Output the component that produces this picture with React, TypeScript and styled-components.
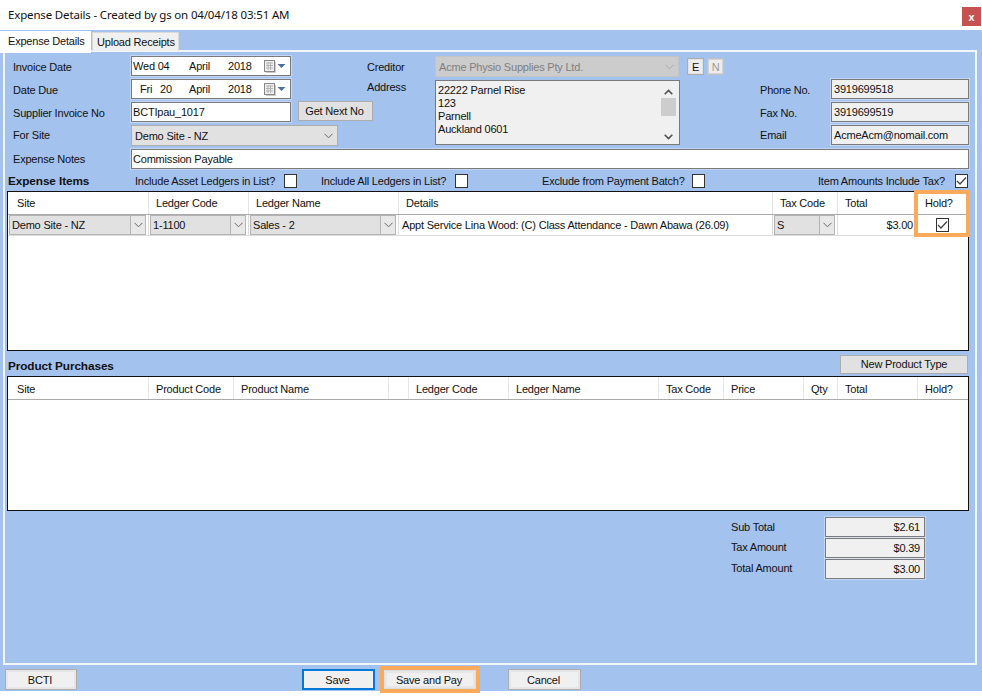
import React from "react";
import styled, { createGlobalStyle, css } from "styled-components";

const Global = createGlobalStyle`
  html, body { margin: 0; padding: 0; background: #fff; }
  #root { width: 982px; height: 700px; overflow: hidden; }
  * { box-sizing: border-box; }
  body { font-family: "Liberation Sans", Arial, sans-serif; font-size: 11px; letter-spacing: -0.2px; color: #111; }
`;

const BLUE = "#a4c2ee";
const ORANGE = "#fbaa5c";

const Page = styled.div`display: flex; flex-direction: column; width: 982px; height: 700px; background: #fff;`;
const TitleBar = styled.header`
  height: 30px; flex: none; display: flex; align-items: flex-start; justify-content: space-between;
  padding: 7px 1px 0 8px;
`;
const TitleText = styled.div`font-family: "Noto Sans", sans-serif; font-size: 11.5px; letter-spacing: -0.16px; line-height: 16px; color: #111;`;
const CloseButton = styled.div`
  width: 19px; height: 19px; background: #c75050; color: #fff; font-weight: bold; font-size: 11px;
  display: flex; align-items: center; justify-content: center; letter-spacing: 0;
`;
const BlueArea = styled.div`height: 661px; flex: none; background: ${BLUE}; display: flex; flex-direction: column;`;
const TabStrip = styled.div`height: 20px; flex: none; display: flex; align-items: flex-start; position: relative; z-index: 1;`;
const Tab = styled.div<{ $active?: boolean }>`
  display: flex; align-items: center;
  ${p => p.$active ? css`
    width: 91px; height: 22px; margin-top: 1px; background: #fff; padding: 0 0 3px 8px;
  ` : css`
    width: 87px; height: 19px; margin: 2px 0 0 1px; background: #f0f0f0; border: 1px solid #d9d9d9; border-bottom: none; padding-left: 4px;
  `}
`;
const Panel = styled.section`
  height: 615px; flex: none; margin: 0 5px 0 3px; border: 2px solid #f2f5fa; padding: 4px 6px 0 2px;
  display: flex; flex-direction: column;
`;
const TopForm = styled.div`display: grid; grid-template-columns: 354px 393px 209px; margin-left: 6px; height: 90px;`;
const Column = styled.div<{ $offset?: number }>`display: flex; flex-direction: column; padding-top: ${p => p.$offset ?? 0}px;`;
const Row = styled.div<{ $height?: number }>`display: flex; align-items: flex-start; height: ${p => p.$height ?? 23}px;`;
const Label = styled.div<{ $width: number; $top?: number }>`
  width: ${p => p.$width}px; flex: none; line-height: 14px; padding-top: ${p => p.$top ?? 4}px; white-space: nowrap;
`;
const FieldBase = css`height: 20px; border: 1px solid #7a7a7a; box-shadow: 0 0 0 1px rgba(255,255,255,.35); display: flex; align-items: center; white-space: nowrap;`;
const TextField = styled.div<{ $width?: number; $readonly?: boolean; $right?: boolean }>`
  ${FieldBase}
  ${p => p.$width ? `width: ${p.$width}px; flex: none;` : "flex: 1;"}
  background: ${p => p.$readonly ? "#f0f0f0" : "#fff"};
  padding: 0 ${p => p.$right ? 4 : 1}px 0 ${p => p.$readonly ? 2 : 1}px;
  justify-content: ${p => p.$right ? "flex-end" : "flex-start"};
`;
const DateField = styled.div`${FieldBase} width: 160px; flex: none; background: #fff; padding-left: 1px; position: relative;`;
const DatePart = styled.span<{ $width: number; $indent?: number }>`
  display: inline-block; flex: none; width: ${p => p.$width}px; padding-left: ${p => p.$indent ?? 0}px;
`;
const DatePicker = styled.svg`margin-left: 1px; flex: none;`;
const SelectBox = styled.div<{ $width: number; $disabled?: boolean }>`
  width: ${p => p.$width}px; height: 21px; flex: none; display: flex; align-items: center; justify-content: space-between;
  background: ${p => p.$disabled ? "#cccccc" : "#e1e1e1"};
  color: ${p => p.$disabled ? "#7f7f7f" : "#111"};
  border: 1px solid ${p => p.$disabled ? "#c4c4c4" : "#adadad"};
  padding: 0 4px 0 3px;
`;
const Chevron = ({ color = "#666" }: { color?: string }) => (
  <svg width="9" height="6" viewBox="0 0 9 6" fill="none"><path d="M.5 .8 4.5 4.8 8.5 .8" stroke={color} strokeWidth="1" /></svg>
);
const GetNext = styled.button`
  width: 75px; height: 20px; flex: none; margin: -1px 0 0 7px; background: #e1e1e1; border: 1px solid #adadad; padding: 0 2px 0 0;
  font: inherit; letter-spacing: inherit; color: inherit;
`;
const CreditorRow = styled.div`display: flex; align-items: flex-start; height: 24px;`;
const SmallButton = styled.div<{ $disabled?: boolean }>`
  width: 17px; height: 17px; flex: none; margin: 2px 0 0 ${p => p.$disabled ? 3 : 8}px;
  background: #ededed; border: 1px solid ${p => p.$disabled ? "#c4c4c4" : "#adadad"}; box-shadow: inset 0 0 0 1px ${p => p.$disabled ? "#d2d2d2" : "#e1e1e1"};
  color: ${p => p.$disabled ? "#9a9a9a" : "#111"}; display: flex; align-items: center; justify-content: center; font-size: 11px;
`;
const AddressBox = styled.div`
  width: 245px; height: 65px; flex: none; background: #f0f0f0; border: 1px solid #7a7a7a; display: flex; justify-content: space-between; padding: 3px 2px 0 2px;
`;
const AddressLines = styled.div`line-height: 13px; white-space: nowrap;`;
const ScrollBar = styled.div`width: 17px; height: 59px; display: flex; flex-direction: column; align-items: center; padding-top: 5px; padding-bottom: 3px;`;
const ScrollThumb = styled.div`width: 15px; height: 18px; margin-top: 3px; background: #cdcdcd;`;
const ScrollSpacer = styled.div`flex: 1;`;
const ScrollArrow = ({ up }: { up?: boolean }) => (
  <svg width="9" height="6" viewBox="0 0 9 6" fill="none"><path d={up ? "M.7 5.2 4.5 1.4 8.3 5.2" : "M.7 .8 4.5 4.6 8.3 .8"} stroke="#505050" strokeWidth="1.6" /></svg>
);
const NotesRow = styled.div`display: flex; align-items: flex-start; margin: 3px 0 0 6px; height: 20px;`;
const SectionBar = styled.div<{ $columns: string; $height: number; $pad?: number }>`
  display: grid; grid-template-columns: ${p => p.$columns}; align-items: center; height: ${p => p.$height}px; padding-top: ${p => p.$pad ?? 0}px;
`;
const SectionTitle = styled.div<{ $drop?: number }>`
  font-weight: bold; font-size: 11.8px; letter-spacing: -0.1px; padding-left: 1px; padding-top: ${p => p.$drop ?? 0}px; white-space: nowrap;
`;
const CheckField = styled.div`display: flex; align-items: center;`;
const CheckLabel = styled.span<{ $width: number }>`width: ${p => p.$width}px; flex: none; white-space: nowrap;`;
const Check = styled.span`
  width: 13px; height: 14px; flex: none; background: #fff; border: 1px solid #333; display: flex; align-items: center; justify-content: center;
`;
const Tick = () => (
  <svg width="11" height="10" viewBox="0 0 11 10" fill="none"><path d="M1 5 4 8 10 1.5" stroke="#444" strokeWidth="1.3" /></svg>
);
const Table = styled.div<{ $height: number }>`
  position: relative; width: 962px; height: ${p => p.$height}px; flex: none; background: #fff; border: 1px solid #111;
`;
const HeaderRow = styled.div<{ $columns: string; $pad: number }>`
  display: grid; grid-template-columns: ${p => p.$columns}; height: 23px; border-bottom: 1px solid #ababab;
  & > div { padding-top: ${p => p.$pad}px; }
`;
const HeaderCell = styled.div`
  padding-left: 7px; border-right: 1px solid #e6e6e6; line-height: 14px; white-space: nowrap;
  &:first-child { padding-left: 9px; }
  &:last-child { border-right: none; }
`;
const DataRow = styled.div<{ $columns: string }>`
  display: grid; grid-template-columns: ${p => p.$columns}; height: 21px; border-bottom: 1px solid #dcdcdc;
`;
const DataCell = styled.div<{ $right?: boolean; $center?: boolean }>`
  display: flex; align-items: center; padding: 0 ${p => p.$right ? 4 : p.$center ? 2 : 0}px 0 ${p => p.$right || p.$center ? 0 : 3}px; border-right: 1px solid #dcdcdc;
  justify-content: ${p => p.$right ? "flex-end" : p.$center ? "center" : "flex-start"}; white-space: nowrap;
  &:last-child { border-right: none; }
`;
const GridSelect = styled.div`
  height: 20px; width: 100%; margin-left: -2px; background: #e1e1e1; border: 1px solid #b4b4b4; display: flex; justify-content: space-between; align-items: stretch; padding-left: 2px;
`;
const GridSelectText = styled.span`align-self: center;`;
const GridSelectArrow = styled.span`
  width: 15px; flex: none; background: #e8e8e8; border-left: 1px solid #b4b4b4; display: flex; align-items: center; justify-content: center;
`;
const Highlight = styled.div`
  position: absolute; left: 906px; top: -2px; width: 56px; height: 47px; border: 4px solid ${ORANGE}; pointer-events: none;
`;
const NewTypeButton = styled.div`
  height: 19px; width: 128px; margin-left: auto; margin-right: 1px; background: #e1e1e1; border: 1px solid #adadad; display: flex; align-items: center; justify-content: center;
`;
const TotalsBlock = styled.div`margin: 6px 0 0 724px; display: flex; flex-direction: column; gap: 1px;`;
const TotalsRow = styled.div`display: flex; align-items: flex-start; height: 20px;`;
const BottomBar = styled.footer`
  height: 26px; flex: none; display: flex; align-items: flex-start; padding: 4px 0 0 5px;
`;
const ActionButton = styled.button<{ $width: number; $gap?: number; $primary?: boolean; $marked?: boolean }>`
  width: ${p => p.$width}px; height: 21px; flex: none; margin-left: ${p => p.$gap ?? 0}px; padding: 0 2px 0 0; background: #f0f0f0;
  font: inherit; letter-spacing: inherit; color: inherit;
  border: 1px solid #adadad; box-shadow: inset 0 0 0 2px #e6e6e6;
  ${p => p.$primary && css`border: 2px solid #0078d7; box-shadow: none;`}
  ${p => p.$marked && css`height: 19px; margin-top: 1px; border: 1px solid #dedede; outline: 4px solid ${ORANGE}; position: relative;`}
`;

const itemColumns = "141px 100px 150px 374px 65px 80px 50px";
const productColumns = "141px 85px 155px 20px 100px 150px 65px 80px 34px 80px 50px";
const itemHeaders = ["Site", "Ledger Code", "Ledger Name", "Details", "Tax Code", "Total", "Hold?"];
const productHeaders = ["Site", "Product Code", "Product Name", "", "Ledger Code", "Ledger Name", "Tax Code", "Price", "Qty", "Total", "Hold?"];

const Calendar = () => (
  <DatePicker width="22" height="13" viewBox="0 0 22 13" fill="none">
    <rect x=".5" y=".5" width="10" height="11" fill="#eee" stroke="#888" />
    <path d="M2 3h7M2 5.5h7M2 8h7M4 2v8M6.5 2v8" stroke="#b4b4b4" />
    <path d="M11.5 2v10.5H2" stroke="#c9c9c9" />
    <path d="M13.5 4h8l-4 4z" fill="#4c6f9b" />
  </DatePicker>
);

const GridSelectCell = ({ text }: { text: string }) => (
  <DataCell>
    <GridSelect>
      <GridSelectText>{text}</GridSelectText>
      <GridSelectArrow><Chevron /></GridSelectArrow>
    </GridSelect>
  </DataCell>
);

export default function App() {
  return (
    <Page>
      <Global />
      <TitleBar>
        <TitleText>Expense Details - Created by gs on 04/04/18 03:51 AM</TitleText>
        <CloseButton>x</CloseButton>
      </TitleBar>
      <BlueArea>
        <TabStrip>
          <Tab $active>Expense Details</Tab>
          <Tab>Upload Receipts</Tab>
        </TabStrip>
        <Panel>
          <TopForm>
            <Column>
              <Row>
                <Label $width={118}>Invoice Date</Label>
                <DateField>
                  <DatePart $width={56}>Wed 04</DatePart>
                  <DatePart $width={39}>April</DatePart>
                  <DatePart $width={35}>2018</DatePart>
                  <Calendar />
                </DateField>
              </Row>
              <Row>
                <Label $width={118}>Date Due</Label>
                <DateField>
                  <DatePart $width={27} $indent={7}>Fri</DatePart>
                  <DatePart $width={29}>20</DatePart>
                  <DatePart $width={39}>April</DatePart>
                  <DatePart $width={35}>2018</DatePart>
                  <Calendar />
                </DateField>
              </Row>
              <Row>
                <Label $width={118}>Supplier Invoice No</Label>
                <TextField $width={160}>BCTIpau_1017</TextField>
                <GetNext>Get Next No</GetNext>
              </Row>
              <Row>
                <Label $width={118} $top={3}>For Site</Label>
                <SelectBox $width={207}>Demo Site - NZ<Chevron /></SelectBox>
              </Row>
            </Column>
            <Column>
              <CreditorRow>
                <Label $width={68}>Creditor</Label>
                <SelectBox $width={244} $disabled>Acme Physio Supplies Pty Ltd.<Chevron color="#aaa" /></SelectBox>
                <SmallButton>E</SmallButton>
                <SmallButton $disabled>N</SmallButton>
              </CreditorRow>
              <Row $height={65}>
                <Label $width={68} $top={0}>Address</Label>
                <AddressBox>
                  <AddressLines>22222 Parnel Rise<br />123<br />Parnell<br />Auckland 0601</AddressLines>
                  <ScrollBar>
                    <ScrollArrow up />
                    <ScrollThumb />
                    <ScrollSpacer />
                    <ScrollArrow />
                  </ScrollBar>
                </AddressBox>
              </Row>
            </Column>
            <Column $offset={23}>
              <Row>
                <Label $width={71}>Phone No.</Label>
                <TextField $readonly>3919699518</TextField>
              </Row>
              <Row>
                <Label $width={71}>Fax No.</Label>
                <TextField $readonly>3919699519</TextField>
              </Row>
              <Row>
                <Label $width={71} $top={3}>Email</Label>
                <TextField $readonly>AcmeAcm@nomail.com</TextField>
              </Row>
            </Column>
          </TopForm>
          <NotesRow>
            <Label $width={118} $top={3}>Expense Notes</Label>
            <TextField>Commission Payable</TextField>
          </NotesRow>
          <SectionBar $columns="128px 186px 221px 276px 1fr" $height={22} $pad={2}>
            <SectionTitle>Expense Items</SectionTitle>
            <CheckField><CheckLabel $width={149}>Include Asset Ledgers in List?</CheckLabel><Check /></CheckField>
            <CheckField><CheckLabel $width={134}>Include All Ledgers in List?</CheckLabel><Check /></CheckField>
            <CheckField><CheckLabel $width={150}>Exclude from Payment Batch?</CheckLabel><Check /></CheckField>
            <CheckField><CheckLabel $width={137}>Item Amounts Include Tax?</CheckLabel><Check><Tick /></Check></CheckField>
          </SectionBar>
          <Table $height={160}>
            <HeaderRow $columns={itemColumns} $pad={4}>
              {itemHeaders.map(h => <HeaderCell key={h}>{h}</HeaderCell>)}
            </HeaderRow>
            <DataRow $columns={itemColumns}>
              <GridSelectCell text="Demo Site - NZ" />
              <GridSelectCell text="1-1100" />
              <GridSelectCell text="Sales - 2" />
              <DataCell>Appt Service Lina Wood: (C) Class Attendance - Dawn Abawa (26.09)</DataCell>
              <GridSelectCell text="S" />
              <DataCell $right>$3.00</DataCell>
              <DataCell $center><Check><Tick /></Check></DataCell>
            </DataRow>
            <Highlight />
          </Table>
          <SectionBar $columns="1fr 1fr" $height={25} $pad={1}>
            <SectionTitle $drop={3}>Product Purchases</SectionTitle>
            <NewTypeButton>New Product Type</NewTypeButton>
          </SectionBar>
          <Table $height={135}>
            <HeaderRow $columns={productColumns} $pad={5}>
              {productHeaders.map((h, i) => <HeaderCell key={i}>{h}</HeaderCell>)}
            </HeaderRow>
          </Table>
          <TotalsBlock>
            <TotalsRow>
              <Label $width={94} $top={3}>Sub Total</Label>
              <TextField $width={100} $readonly $right>$2.61</TextField>
            </TotalsRow>
            <TotalsRow>
              <Label $width={94} $top={2}>Tax Amount</Label>
              <TextField $width={100} $readonly $right>$0.39</TextField>
            </TotalsRow>
            <TotalsRow>
              <Label $width={94} $top={2}>Total Amount</Label>
              <TextField $width={100} $readonly $right>$3.00</TextField>
            </TotalsRow>
          </TotalsBlock>
        </Panel>
        <BottomBar>
          <ActionButton $width={72}>BCTI</ActionButton>
          <ActionButton $width={73} $gap={225} $primary>Save</ActionButton>
          <ActionButton $width={92} $gap={9} $marked>Save and Pay</ActionButton>
          <ActionButton $width={73} $gap={32}>Cancel</ActionButton>
        </BottomBar>
      </BlueArea>
    </Page>
  );
}
